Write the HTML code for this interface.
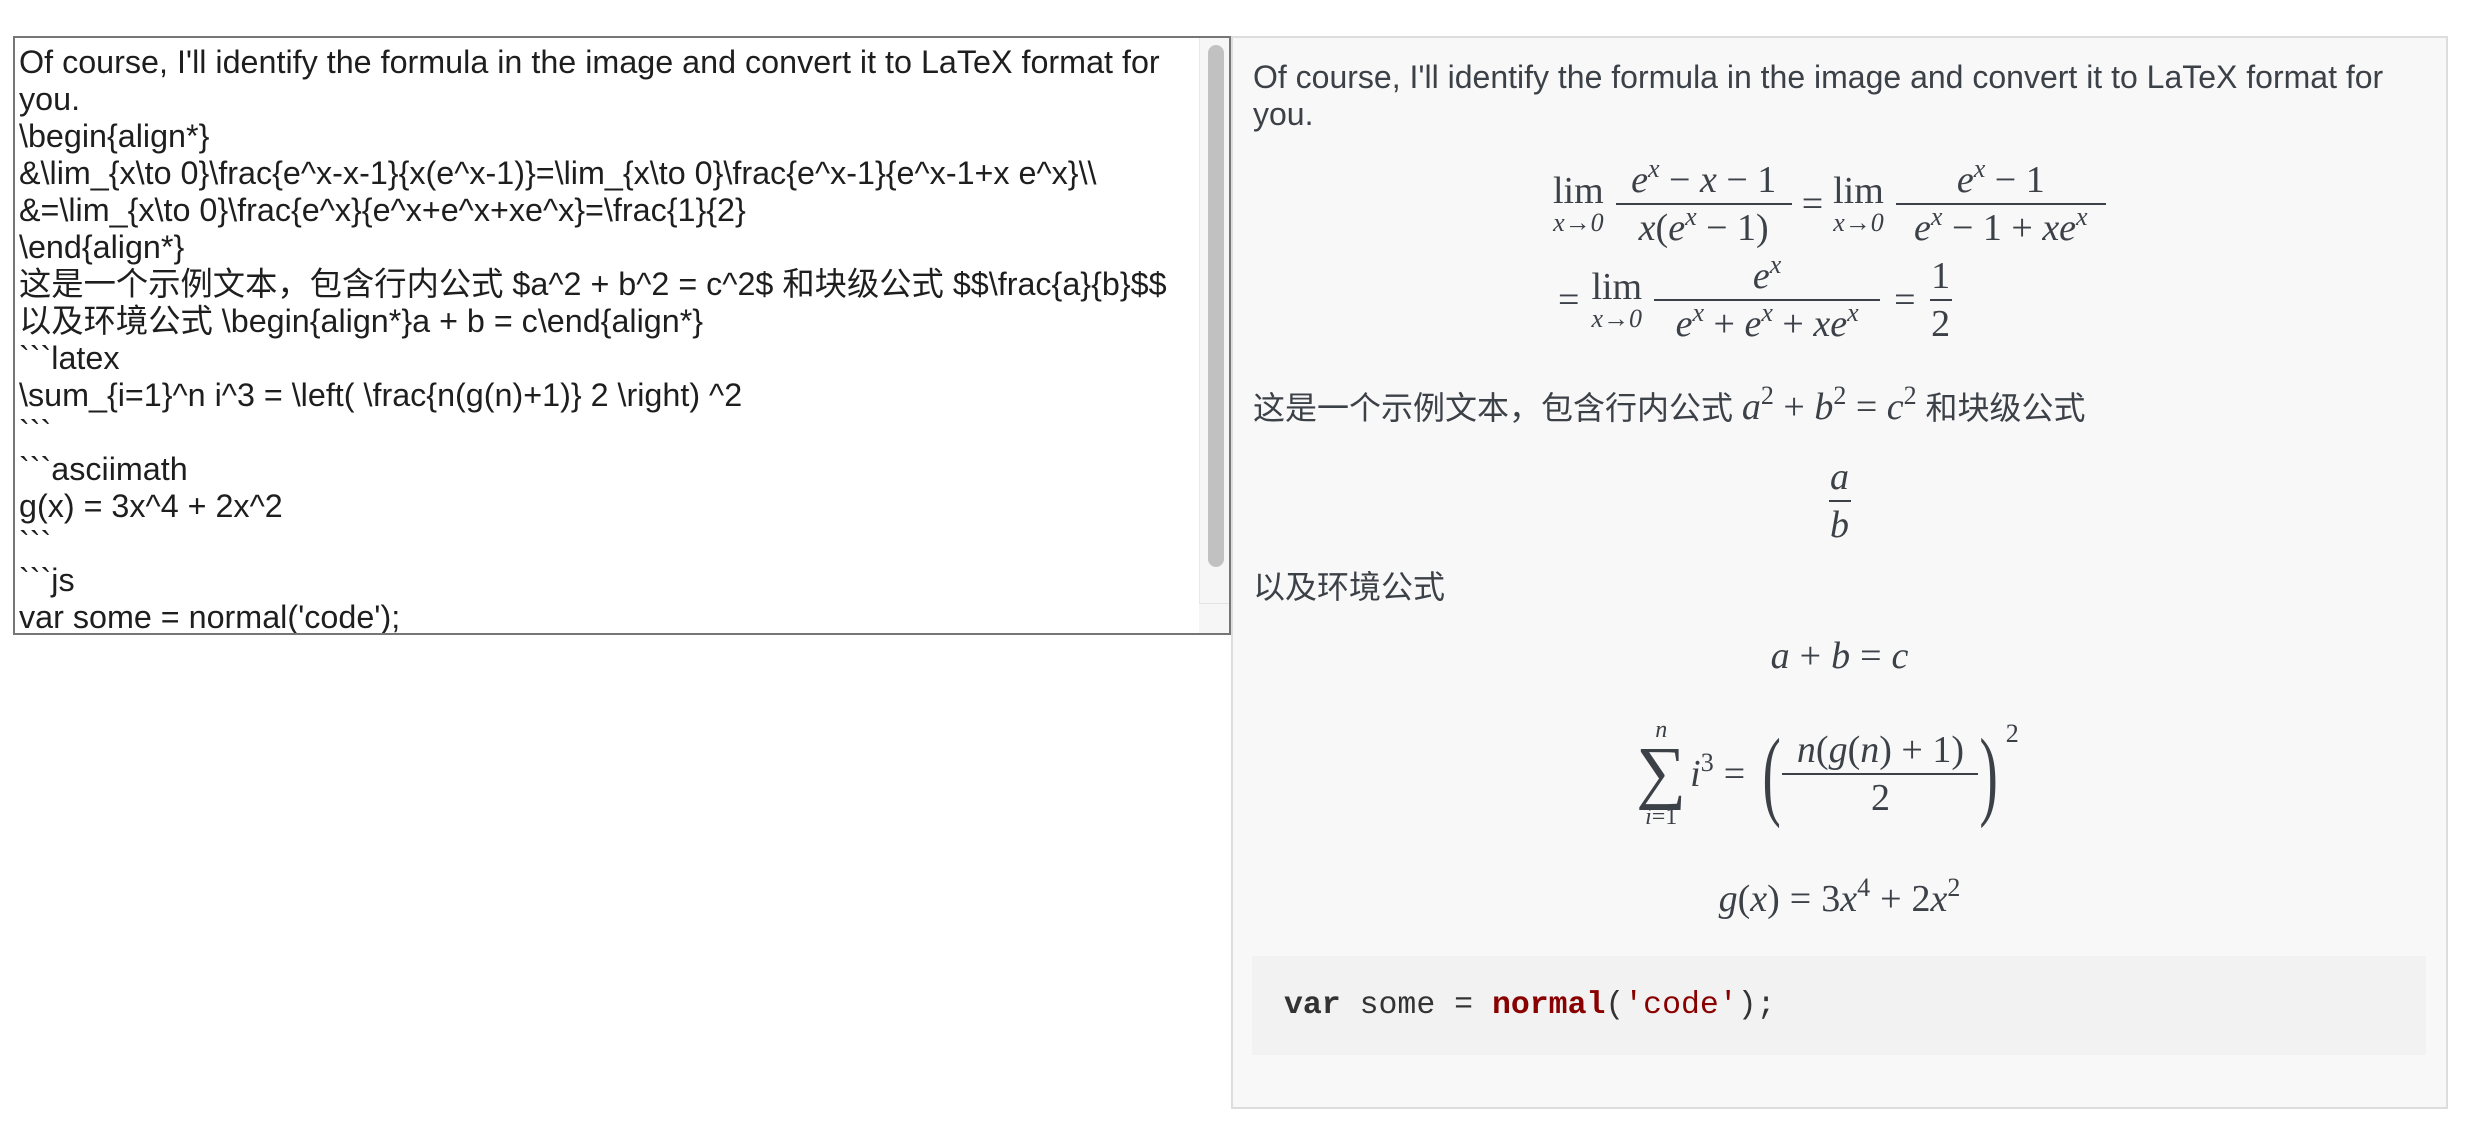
<!DOCTYPE html>
<html><head><meta charset="utf-8"><style>
*{box-sizing:border-box;margin:0;padding:0}
body{width:2480px;height:1122px;background:#fff;position:relative;overflow:hidden;font-family:"Liberation Sans","Noto Sans CJK SC",sans-serif;}
#ta{position:absolute;left:13px;top:36px;width:1218px;height:599px;border:2px solid #767676;background:#fff;overflow:hidden}
#tx{position:absolute;left:4px;top:6px;font-size:32.3px;color:#1e1e1e}
#tx div{height:37px;line-height:37px;white-space:pre;overflow:visible}
#sb{position:absolute;right:0;top:0;width:30px;height:100%;background:#f6f6f6;border-left:1px solid #e8e8e8}
#thumb{position:absolute;left:8px;top:7px;width:16px;height:522px;border-radius:8px;background:#c1c1c1}
#corner{position:absolute;right:0;bottom:0;width:30px;height:30px;background:#f6f6f6;border-top:1px solid #e3e3e3}
#pn{position:absolute;left:1231px;top:36px;width:1217px;height:1073px;border:2px solid #ddd;background:#f8f8f8;color:#3c4148}
.t{position:absolute;left:20px;font-size:32px;line-height:37px;white-space:nowrap}
.m{font-family:"Liberation Serif","DejaVu Serif",serif;font-size:38px;line-height:1;white-space:nowrap}
.i{font-style:italic}
.row{position:absolute;display:flex;align-items:center}
.fr{display:inline-flex;flex-direction:column;align-items:center;vertical-align:middle}
.fr .n{padding:0 4px 4px;border-bottom:2px solid #3c4148;width:100%;text-align:center}
.fr .d{padding-top:4px}
.lim{display:inline-flex;flex-direction:column;align-items:center;margin-right:12px;vertical-align:middle}
.lim .s{font-size:26px;font-style:italic;margin-top:0}
sup{font-size:26px;vertical-align:15px;line-height:0}
.op{margin:0 10px}
.c{position:absolute;left:0;right:0;text-align:center}
#code{position:absolute;left:19px;top:918px;width:1174px;height:99px;background:#f2f2f2;font-family:"Liberation Mono","DejaVu Sans Mono",monospace;font-size:31.5px;line-height:99px;padding-left:32px;color:#333;white-space:pre}
</style></head><body>
<div id="ta"><div id="tx">
<div>Of course, I'll identify the formula in the image and convert it to LaTeX format for</div>
<div>you.</div>
<div>\begin{align*}</div>
<div>&amp;\lim_{x\to 0}\frac{e^x-x-1}{x(e^x-1)}=\lim_{x\to 0}\frac{e^x-1}{e^x-1+x e^x}\\</div>
<div>&amp;=\lim_{x\to 0}\frac{e^x}{e^x+e^x+xe^x}=\frac{1}{2}</div>
<div>\end{align*}</div>
<div>这是一个示例文本，包含行内公式 $a^2 + b^2 = c^2$ 和块级公式 $$\frac{a}{b}$$</div>
<div>以及环境公式 \begin{align*}a + b = c\end{align*}</div>
<div>&#96;&#96;&#96;latex</div>
<div>\sum_{i=1}^n i^3 = \left( \frac{n(g(n)+1)} 2 \right) ^2</div>
<div>&#96;&#96;&#96;</div>
<div>&#96;&#96;&#96;asciimath</div>
<div>g(x) = 3x^4 + 2x^2</div>
<div>&#96;&#96;&#96;</div>
<div>&#96;&#96;&#96;js</div>
<div>var some = normal('code');</div>
</div>
<div id="sb"><div id="thumb"></div></div><div id="corner"></div></div>

<div id="pn">
<div class="t" style="top:21px">Of course, I'll identify the formula in the image and convert it to LaTeX format for<br>you.</div>

<div class="row m" style="left:320px;top:111px;height:110px">
<span class="lim">lim<span class="s">x→0</span></span>
<span class="fr" style="width:176px"><span class="n"><span class="i">e</span><sup class="i">x</sup> − <span class="i">x</span> − 1</span><span class="d"><span class="i">x</span>(<span class="i">e</span><sup class="i">x</sup> − 1)</span></span>
<span class="op">=</span>
<span class="lim">lim<span class="s">x→0</span></span>
<span class="fr" style="width:210px"><span class="n"><span class="i">e</span><sup class="i">x</sup> − 1</span><span class="d"><span class="i">e</span><sup class="i">x</sup> − 1 + <span class="i">xe</span><sup class="i">x</sup></span></span>
</div>

<div class="row m" style="left:325px;top:217px;height:90px">
<span style="margin-right:12px">=</span>
<span class="lim">lim<span class="s">x→0</span></span>
<span class="fr" style="width:226px"><span class="n"><span class="i">e</span><sup class="i">x</sup></span><span class="d"><span class="i">e</span><sup class="i">x</sup> + <span class="i">e</span><sup class="i">x</sup> + <span class="i">xe</span><sup class="i">x</sup></span></span>
<span class="op" style="margin:0 14px">=</span>
<span class="fr" style="width:22px"><span class="n" style="padding:0 0 4px">1</span><span class="d">2</span></span>
</div>

<div class="t" style="top:350px">这是一个示例文本，包含行内公式 <span class="m"><span class="i">a</span><sup>2</sup> + <span class="i">b</span><sup>2</sup> = <span class="i">c</span><sup>2</sup></span> 和块级公式</div>

<div class="c m" style="top:420px;height:76px"><span class="fr" style="width:22px"><span class="n i" style="padding:0 0 4px">a</span><span class="d i">b</span></span></div>

<div class="t" style="top:531px">以及环境公式</div>

<div class="c m" style="top:599px"><span class="i">a</span><span class="op">+</span><span class="i">b</span><span class="op">=</span><span class="i">c</span></div>

<div class="row m" style="top:681px;height:110px;left:0;right:0;justify-content:center;padding-right:24px">
<span class="lim" style="margin-right:4px"><span style="font-size:24px;font-style:italic;line-height:24px">n</span><span style="font-size:70px;line-height:62px">∑</span><span style="font-size:24px;font-style:italic;line-height:26px">i<span style="font-style:normal">=1</span></span></span>
<span><span class="i">i</span><sup>3</sup></span>
<span class="op">=</span>
<span style="font-size:100px;transform:scaleX(0.55);display:inline-block;margin-right:-6px">(</span>
<span class="fr" style="width:196px"><span class="n"><span class="i">n</span>(<span class="i">g</span>(<span class="i">n</span>) + 1)</span><span class="d">2</span></span>
<span style="font-size:100px;transform:scaleX(0.55);display:inline-block;margin-left:-6px">)</span>
<span style="align-self:flex-start;font-size:26px;margin-top:2px">2</span>
</div>

<div class="c m" style="top:842px"><span class="i">g</span>(<span class="i">x</span>)<span class="op">=</span>3<span class="i">x</span><sup>4</sup><span class="op">+</span>2<span class="i">x</span><sup>2</sup></div>

<div id="code"><b>var</b> some = <b style="color:#880000">normal</b>(<span style="color:#880000">'code'</span>);</div>
</div>
</body></html>
